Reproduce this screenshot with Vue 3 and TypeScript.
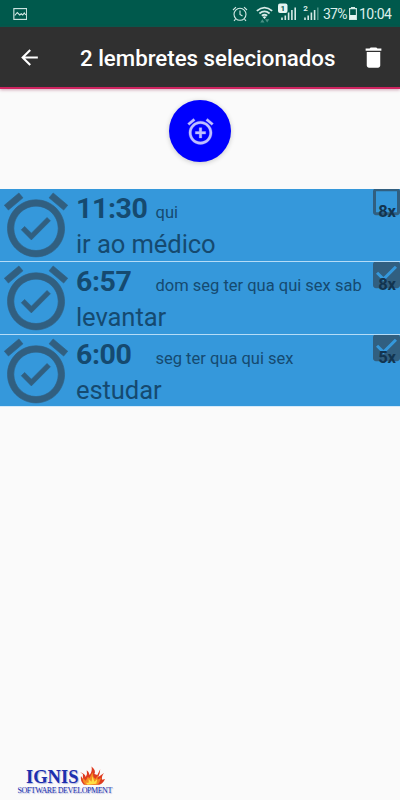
<script setup lang="ts">
interface Reminder {
  time: string
  days: string
  title: string
  count: string
  selected: boolean
}

const reminders: Reminder[] = [
  { time: '11:30', days: 'qui', title: 'ir ao médico', count: '8x', selected: false },
  { time: '6:57', days: 'dom seg ter qua qui sex sab', title: 'levantar', count: '8x', selected: true },
  { time: '6:00', days: 'seg ter qua qui sex', title: 'estudar', count: '5x', selected: true },
]
</script>

<template>
  <div class="screen">
    <div class="status">
      <svg class="s-picture" viewBox="0 0 14 12">
        <rect x="0.6" y="0.6" width="12.8" height="10.8" />
        <path d="M1.5 7.5L4 4.5L6.5 7L8 5.8L9.5 7L11 5L12.5 7" />
      </svg>
      <svg class="s-alarm" viewBox="0 0 16 16">
        <circle cx="8" cy="8.3" r="6" />
        <path d="M8 4.5V8.5L10.5 10M1 4L4 1.2M15 4L12 1.2M3.5 13.2L2 15M12.5 13.2L14 15" />
      </svg>
      <svg class="s-wifi" viewBox="0 0 16 16">
        <path class="line" d="M0.8 4.6Q8 -1.6 15.2 4.6M3.2 7Q8 3 12.8 7M5.5 9.2Q8 7.2 10.5 9.2" />
        <path class="solid" d="M6.3 10.3Q8 9 9.7 10.3L8 12.3Z" />
        <path class="dim" d="M4 15.5L6 12.5L8 15.5ZM8.5 12.5H12.5L10.5 15.5Z" />
      </svg>
      <svg class="s-signal" viewBox="0 0 20 18">
        <rect class="solid" x="0" y="0.5" width="9.5" height="9.5" rx="2" />
        <text class="badge-one" x="4.8" y="8.2">1</text>
        <path class="bars" d="M4 17V14.5M7.3 17V12.5M10.6 17V9.5M13.9 17V7M17.2 17V4.5" />
      </svg>
      <svg class="s-signal second" viewBox="0 0 17 18">
        <text class="badge-two" x="2.5" y="8">2</text>
        <path class="bars" d="M2 17V14.5M5.2 17V12.5M8.4 17V9.5M11.6 17V7" />
        <path class="bars faint" d="M14.8 17V4.5" />
      </svg>
      <span class="percent">37%</span>
      <svg class="s-battery" viewBox="0 0 8 13">
        <path d="M2.5 1.2V0.4H5.5V1.2M0.6 1.6H7.4V12.4H0.6Z" />
        <rect class="solid" x="1" y="8" width="6" height="4" />
      </svg>
      <span class="clock">10:04</span>
    </div>

    <header class="bar">
      <svg class="back" viewBox="0 0 24 24">
        <path d="M20 11H7.83l5.59-5.59L12 4l-8 8 8 8 1.41-1.41L7.83 13H20v-2z" />
      </svg>
      <h1>2 lembretes selecionados</h1>
      <svg class="trash" viewBox="0 0 24 24">
        <path d="M6 19c0 1.1.9 2 2 2h8c1.1 0 2-.9 2-2V7H6v12zM19 4h-3.5l-1-1h-5l-1 1H5v2h14V4z" />
      </svg>
    </header>

    <div class="add-area">
      <button class="fab" aria-label="Adicionar lembrete">
        <svg viewBox="0 0 24 24">
          <path
            d="M7.88 3.39L6.6 1.86 2 5.71l1.29 1.53 4.59-3.85zM22 5.72l-4.6-3.86-1.29 1.53 4.6 3.86L22 5.72zM12 4c-4.97 0-9 4.03-9 9s4.02 9 9 9c4.97 0 9-4.03 9-9s-4.03-9-9-9zm0 16c-3.87 0-7-3.13-7-7s3.13-7 7-7 7 3.13 7 7-3.13 7-7 7zm1-11h-2v3H8v2h3v3h2v-3h3v-2h-3V9z"
          />
        </svg>
      </button>
    </div>

    <main class="list">
      <section v-for="item in reminders" :key="item.time" class="row">
        <svg class="alarm" viewBox="0.64 0.6 22.7 22.7">
          <path
            d="M22 5.72l-4.6-3.86-1.29 1.53 4.6 3.86L22 5.72zM7.88 3.39L6.6 1.86 2 5.71l1.29 1.53 4.59-3.85zM12 4c-4.97 0-9 4.03-9 9s4.02 9 9 9c4.97 0 9-4.03 9-9s-4.03-9-9-9zm0 16c-3.87 0-7-3.13-7-7s3.13-7 7-7 7 3.13 7 7-3.13 7-7 7zm-1.46-5.47L8.41 12.4l-1.06 1.06 3.18 3.18 6-6-1.06-1.06-4.93 4.95z"
          />
        </svg>
        <div class="info">
          <div class="line-top">
            <span class="time">{{ item.time }}</span>
            <span class="days">{{ item.days }}</span>
          </div>
          <div class="title">{{ item.title }}</div>
        </div>
        <div class="pick">
          <svg viewBox="3 3.5 18 18">
            <path
              v-if="item.selected"
              d="M19 3H5c-1.11 0-2 .9-2 2v14c0 1.1.89 2 2 2h14c1.11 0 2-.9 2-2V5c0-1.1-.89-2-2-2zm-9 13.4l-5-5 1.41-1.41L10 13.57l7.59-7.59L19 7.4l-9 9z"
            />
            <path
              v-else
              d="M19 5v14H5V5h14m0-2H5c-1.1 0-2 .9-2 2v14c0 1.1.9 2 2 2h14c1.1 0 2-.9 2-2V5c0-1.1-.9-2-2-2z"
            />
          </svg>
          <span class="count">{{ item.count }}</span>
        </div>
      </section>
    </main>

    <footer class="brand">
      <div class="brand-top">
        <span class="brand-name">IGNIS</span>
        <svg class="flame" viewBox="0 0 26 20">
          <path class="red" d="M4 19Q0 15 1 10L3 13L3 8L0 6Q5 7 6 11Q8 8 7 4Q10 6 10 9Q13 5 12 0Q17 4 15 8L18 9L21 3Q21 7 19 11L22 9L25 7Q22 11 23 14L26 13Q24 18 20 19Z" />
          <path class="orange" d="M6 19Q2 16 3 12L6 15L8 11L10 12L13 6L14 11L16 13L19 9L18 14L22 12L20 17L18 19Z" />
          <path class="yellow" d="M8 19L6 17L9 17L9 13L12 16L13 10L15 16L18 13L17 18Z" />
        </svg>
      </div>
      <div class="brand-sub">SOFTWARE DEVELOPMENT</div>
    </footer>
  </div>
</template>

<style>
body {
  background: #fafafa;
}
</style>

<style scoped>
.screen {
  display: flex;
  flex-direction: column;
  width: 400px;
  height: 800px;
  overflow: hidden;
  background: #fafafa;
  font-family: Roboto, sans-serif;
}
svg {
  display: block;
  flex: none;
}
.status {
  display: flex;
  align-items: center;
  flex: none;
  box-sizing: border-box;
  height: 27px;
  padding-left: 12.5px;
  background: #00594c;
  color: #dcefeb;
  font-size: 14px;
  line-height: 28px;
}
.status svg {
  fill: none;
  stroke: #d5eae6;
  stroke-width: 1.1;
}
.status .solid {
  fill: #e6f5f2;
  stroke: none;
}
.status .dim {
  fill: #4b9185;
  stroke: none;
}
.status .line {
  stroke-width: 1.7;
}
.s-picture {
  width: 14.5px;
  height: 12px;
}
.s-alarm {
  width: 16px;
  height: 16px;
  margin-left: 205px;
}
.s-wifi {
  width: 17px;
  height: 17px;
  margin: 2px 0 0 8px;
}
.s-signal {
  width: 20px;
  height: 18px;
  margin: -3px 0 0 5px;
}
.s-signal.second {
  width: 17px;
  margin-left: 5px;
}
.status .bars {
  stroke-width: 1.6;
}
.status .faint {
  stroke: #4b9185;
}
.s-signal text {
  stroke: none;
  text-anchor: middle;
  font-weight: 700;
  font-size: 8px;
}
.s-signal .badge-one {
  fill: #00594c;
}
.s-signal .badge-two {
  fill: #dcefeb;
}
.percent {
  width: 26px;
  margin-left: 3px;
  letter-spacing: -0.8px;
}
.s-battery {
  width: 8px;
  height: 13px;
}
.clock {
  margin-left: 2px;
  letter-spacing: -0.5px;
}
.bar {
  position: relative;
  display: flex;
  align-items: center;
  flex: none;
  box-sizing: border-box;
  height: 62px;
  padding: 0 13px 0 16.5px;
  border-bottom: 2px solid #cf2460;
  background: #303030;
  box-shadow: 0 1px 3px rgba(150, 40, 80, 0.4);
}
.bar svg {
  fill: #fff;
}
.bar h1 {
  flex: 1;
  margin: 2px 0 0 38.5px;
  color: #fff;
  font-size: 22.25px;
  font-weight: 500;
  line-height: 26px;
  white-space: nowrap;
}
.bar .back {
  width: 25px;
  height: 25px;
}
.bar .trash {
  width: 27px;
  height: 27px;
}
.add-area {
  display: flex;
  justify-content: center;
  flex: none;
  box-sizing: border-box;
  height: 100px;
  padding-top: 11px;
}
.fab {
  display: flex;
  align-items: center;
  justify-content: center;
  width: 62px;
  height: 62px;
  padding: 0;
  border: 0;
  border-radius: 50%;
  background: #0000fe;
  box-shadow: 0 1px 5px rgba(0, 0, 0, 0.2);
}
.fab svg {
  width: 31px;
  height: 31px;
  fill: #bfbfff;
  stroke: #bfbfff;
  stroke-width: 0.2;
}
.list {
  display: flex;
  flex-direction: column;
  gap: 1px;
  flex: none;
  border-bottom: 1px solid #d4eafa;
  background: #b5dcf7;
}
.row {
  display: flex;
  height: 71.8px;
  background: #3598db;
}
.alarm {
  width: 72px;
  height: 72px;
  fill: #315f80;
  stroke: #315f80;
  stroke-width: 0.2;
}
.info {
  flex: 1;
  padding: 3px 0 0 4px;
  color: #154a70;
  white-space: nowrap;
}
.line-top {
  display: flex;
  align-items: baseline;
  height: 34px;
  line-height: 34px;
}
.time {
  width: 79.5px;
  font-size: 28.5px;
  font-weight: 700;
  letter-spacing: -0.4px;
}
.days {
  font-size: 16.5px;
}
.title {
  padding-top: 1px;
  font-size: 25.6px;
  line-height: 34px;
  letter-spacing: -0.1px;
}
.pick {
  position: relative;
  width: 27px;
}
.pick svg {
  width: 27px;
  height: 27px;
  fill: #315f80;
}
.count {
  position: absolute;
  top: 14px;
  right: 4px;
  color: #12344f;
  font-size: 16.5px;
  font-weight: 700;
  line-height: 18px;
}
.brand {
  align-self: flex-start;
  width: 96px;
  margin: auto 0 5px 17.5px;
  color: #1c2fae;
  font-family: "Liberation Serif", serif;
  text-shadow: 1px 1px 1px #b3b9dd;
}
.brand-top {
  display: flex;
  align-items: flex-end;
  height: 20px;
  padding-left: 8.5px;
}
.brand-name {
  width: 54px;
  font-size: 18.5px;
  font-weight: 700;
  line-height: 18px;
}
.flame {
  width: 25px;
  height: 20px;
}
.red {
  fill: #df3c20;
}
.orange {
  fill: #f58a22;
}
.yellow {
  fill: #ffdf45;
}
.brand-sub {
  font-size: 8px;
  letter-spacing: -0.45px;
  line-height: 9px;
  white-space: nowrap;
}
</style>
